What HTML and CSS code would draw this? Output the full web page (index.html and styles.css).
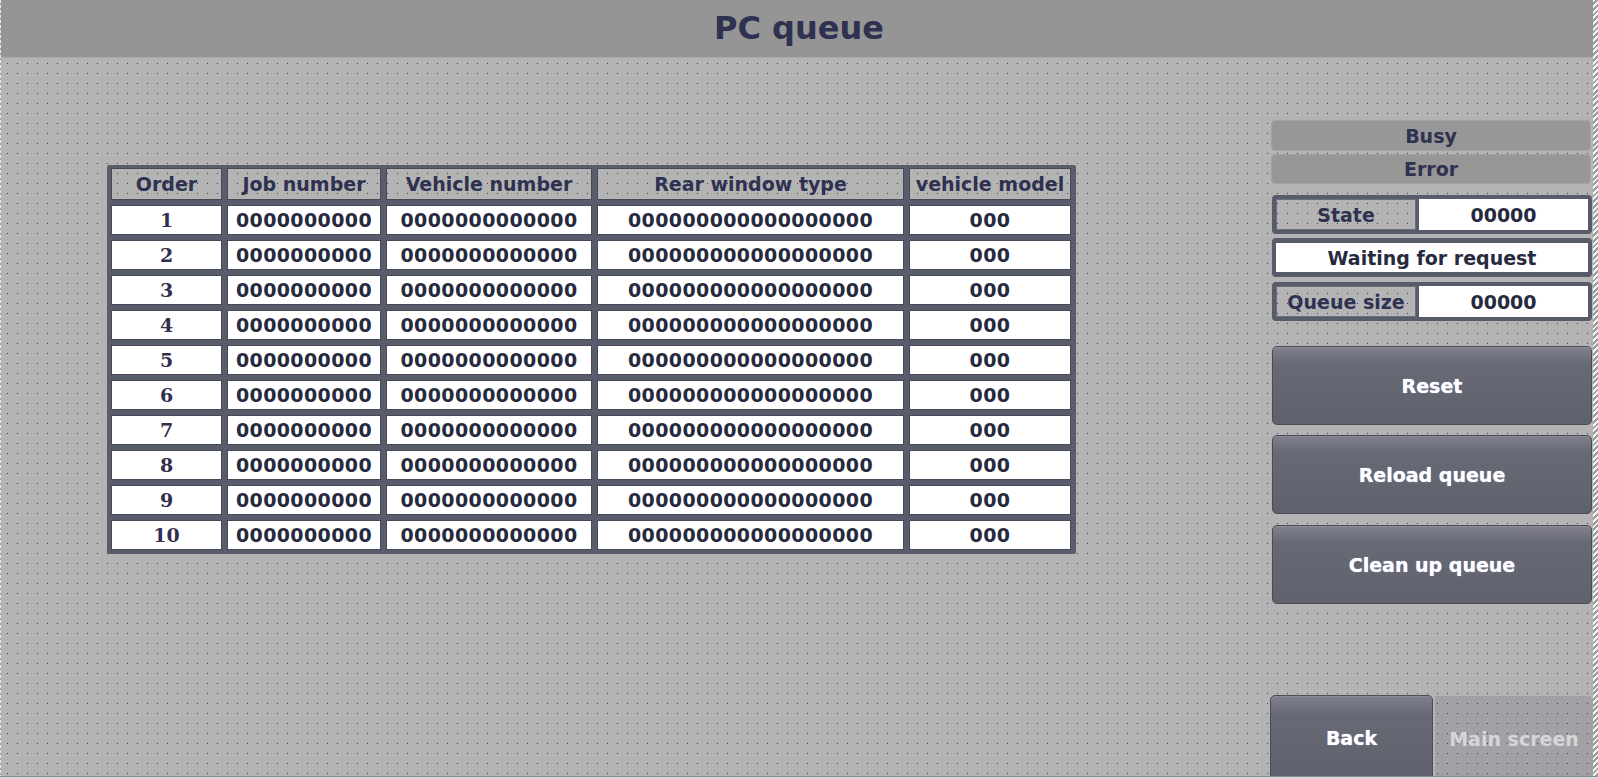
FILE: index.html
```html
<!DOCTYPE html>
<html>
<head>
<meta charset="utf-8">
<title>PC queue</title>
<link rel="stylesheet" href="styles.css">
</head>
<body>
<div class="edge-left"></div>
<div class="edge-right"></div>
<header class="header">PC queue</header>
<main class="main dots">
  <div class="table">
    <div class="th dots">Order</div>
    <div class="th dots">Job number</div>
    <div class="th dots">Vehicle number</div>
    <div class="th dots">Rear window type</div>
    <div class="th dots">vehicle model</div>

    <div class="td num">1</div><div class="td">0000000000</div><div class="td">0000000000000</div><div class="td">000000000000000000</div><div class="td">000</div>
    <div class="td num">2</div><div class="td">0000000000</div><div class="td">0000000000000</div><div class="td">000000000000000000</div><div class="td">000</div>
    <div class="td num">3</div><div class="td">0000000000</div><div class="td">0000000000000</div><div class="td">000000000000000000</div><div class="td">000</div>
    <div class="td num">4</div><div class="td">0000000000</div><div class="td">0000000000000</div><div class="td">000000000000000000</div><div class="td">000</div>
    <div class="td num">5</div><div class="td">0000000000</div><div class="td">0000000000000</div><div class="td">000000000000000000</div><div class="td">000</div>
    <div class="td num">6</div><div class="td">0000000000</div><div class="td">0000000000000</div><div class="td">000000000000000000</div><div class="td">000</div>
    <div class="td num">7</div><div class="td">0000000000</div><div class="td">0000000000000</div><div class="td">000000000000000000</div><div class="td">000</div>
    <div class="td num">8</div><div class="td">0000000000</div><div class="td">0000000000000</div><div class="td">000000000000000000</div><div class="td">000</div>
    <div class="td num">9</div><div class="td">0000000000</div><div class="td">0000000000000</div><div class="td">000000000000000000</div><div class="td">000</div>
    <div class="td num">10</div><div class="td">0000000000</div><div class="td">0000000000000</div><div class="td">000000000000000000</div><div class="td">000</div>
  </div>

  <aside class="panel">
    <div class="flag">Busy</div>
    <div class="flag flag-error">Error</div>

    <div class="field field-state">
      <div class="field-label dots">State</div>
      <div class="field-value">00000</div>
    </div>
    <div class="field field-status">
      <div class="field-value wide">Waiting for request</div>
    </div>
    <div class="field field-queue">
      <div class="field-label dots">Queue size</div>
      <div class="field-value">00000</div>
    </div>

    <button class="btn btn-reset">Reset</button>
    <button class="btn btn-reload">Reload queue</button>
    <button class="btn btn-clean">Clean up queue</button>

    <nav class="nav">
      <button class="btn btn-back">Back</button>
      <button class="btn-main dots">Main screen</button>
    </nav>
  </aside>
</main>
<footer class="footer"></footer>
</body>
</html>
```

FILE: styles.css
```css
html, body {
  margin: 0;
  padding: 0;
}

body {
  width: 1598px;
  height: 779px;
  overflow: hidden;
  position: relative;
  font-family: "DejaVu Sans", Verdana, sans-serif;
  font-weight: bold;
  background: #b4b4b4;
  color: #2e3150;
}

.dots {
  background-color: #b4b4b4;
  background-image: conic-gradient(from 270deg at 1px 1px, #3e3e42 0 90deg, transparent 90deg);
  background-size: 10px 10px;
  background-position: 7px 3px;
  background-attachment: fixed;
}

.edge-left {
  position: absolute;
  left: 0;
  top: 0;
  width: 1px;
  height: 779px;
  background: repeating-linear-gradient(180deg, #e8e8e8 0 3px, #a0a0a0 3px 5px);
  z-index: 5;
}

.edge-right {
  position: absolute;
  right: 0;
  top: 0;
  width: 5px;
  height: 779px;
  background: repeating-linear-gradient(135deg, #f2f2f2 0 2px, #9c9c9c 2px 4px);
  z-index: 5;
}

.header {
  height: 57px;
  line-height: 57px;
  border-bottom: 1px solid #a9a9a9;
  background: #959595;
  text-align: center;
  font-size: 32px;
  color: #2e3150;
}

.main {
  height: 718px;
  display: flex;
  align-items: flex-start;
}

.table {
  margin-top: 107px;
  margin-left: 107px;
  display: grid;
  grid-template-columns: 111px 154px 206px 307px 162px;
  grid-template-rows: 32px repeat(10, 30px);
  column-gap: 5px;
  row-gap: 5px;
  padding: 3px 5px 4px 4px;
  background: #595c6a;
  border-radius: 2px;
}

.th, .td {
  display: flex;
  align-items: center;
  justify-content: center;
  font-size: 19px;
  box-sizing: border-box;
  border: 1px solid #474a58;
  white-space: nowrap;
}

.th {
  color: #2e3150;
}

.td {
  background: #ffffff;
  color: #262a3e;
  letter-spacing: 0.4px;
}

.td.num {
  font-family: "DejaVu Serif", "Liberation Serif", serif;
  color: #33304e;
  letter-spacing: 0;
}

.panel {
  margin-top: 62px;
  margin-left: auto;
  margin-right: 5px;
  width: 323px;
  height: 656px;
  display: flex;
  flex-direction: column;
}

.flag {
  margin-left: 1px;
  margin-right: 2px;
  height: 31px;
  box-sizing: border-box;
  border-radius: 4px;
  background: #979797;
  border: 1px solid #a4a4a4;
  display: flex;
  align-items: center;
  justify-content: center;
  font-size: 19px;
  color: #2e3150;
}

.flag-error {
  margin-top: 3px;
  height: 30px;
}

.field {
  margin-left: 2px;
  margin-right: 1px;
  height: 39px;
  box-sizing: border-box;
  border: 3px solid #585b69;
  border-radius: 4px;
  padding: 1px;
  display: flex;
  gap: 3px;
  background: #585b69;
}

.field-state { margin-top: 11px; }
.field-status { margin-top: 4px; }
.field-queue { margin-top: 5px; }

.field-label {
  width: 140px;
  box-sizing: border-box;
  border: 1px solid #6a6d7a;
  display: flex;
  align-items: center;
  justify-content: center;
  font-size: 19px;
  color: #2e3150;
}

.field-value {
  flex: 1;
  background: #ffffff;
  display: flex;
  align-items: center;
  justify-content: center;
  font-size: 19px;
  color: #262a3e;
}

.field-status .field-value {
  margin: 1px 0;
}

.btn {
  margin-left: 2px;
  margin-right: 1px;
  height: 79px;
  box-sizing: border-box;
  border: 1px solid #494b57;
  border-radius: 5px;
  background: linear-gradient(180deg, #80818d 0%, #676975 22%, #5f616d 100%);
  box-shadow: inset 0 1px 0 #8c8d98;
  color: #ffffff;
  font-family: "DejaVu Sans", Verdana, sans-serif;
  font-weight: bold;
  font-size: 19px;
  text-shadow: 0 0 1px #c9d8ff;
  padding: 0;
  display: flex;
  align-items: center;
  justify-content: center;
}

.btn-reset { margin-top: 25px; }
.btn-reload { margin-top: 10px; }
.btn-clean { margin-top: 11px; }

.nav {
  margin-top: auto;
  height: 81px;
  display: flex;
  gap: 2px;
}

.btn-back {
  margin: 0;
  width: 163px;
  height: 85px;
  border-bottom-left-radius: 0;
  border-bottom-right-radius: 0;
}

.btn-main {
  flex: 1;
  height: 85px;
  margin-top: 1px;
  border: none;
  border-top-right-radius: 5px;
  background-color: #a2a2a6;
  color: #d6d6da;
  font-family: "DejaVu Sans", Verdana, sans-serif;
  font-weight: bold;
  font-size: 19px;
  padding: 0;
  display: flex;
  align-items: center;
  justify-content: center;
}

.footer {
  height: 2px;
  border-top: 1px solid #8c8c8c;
  background: #d8d8d8;
  position: relative;
  z-index: 6;
}
```
